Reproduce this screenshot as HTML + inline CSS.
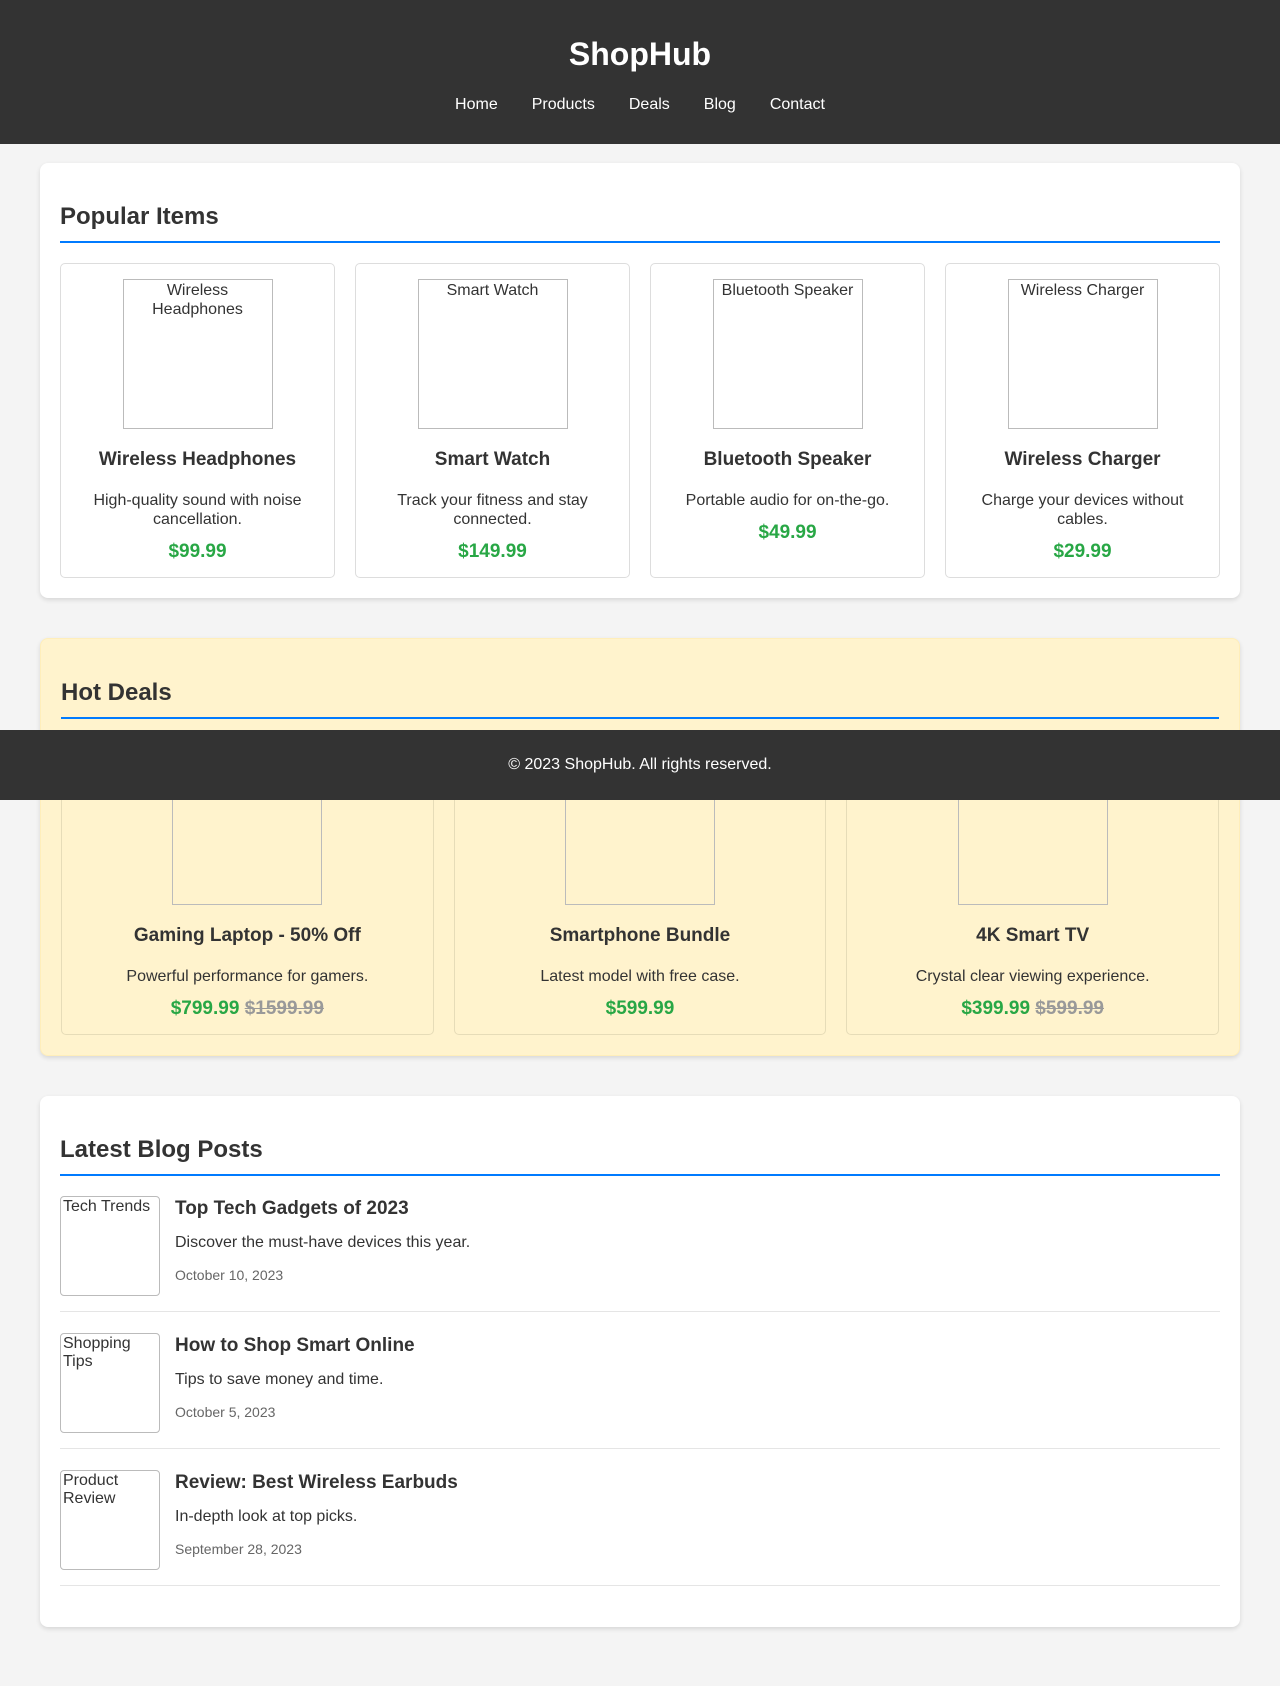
<!DOCTYPE html>
<html><head><meta charset="utf-8"><style>
*{box-sizing:border-box}
body{margin:0;background:#f4f4f4;font-family:"Liberation Sans",Arial,sans-serif;color:#333;height:1686px;position:relative}
header{background:#333;color:#fff;height:144px;text-align:center;padding-top:34px}
header h1{margin:0;font-size:32px;line-height:40px}
nav{margin-top:22px;font-size:16px}
nav a{color:#fff;text-decoration:none;margin:0 17px}
main{width:1200px;margin:0 auto;padding-top:19px}
section{background:#fff;border-radius:8px;box-shadow:0 2px 5px rgba(0,0,0,.12);padding:20px 20px 20px;margin-bottom:40px}
h2{font-size:24px;margin:20px 0 20px;padding-bottom:10px;border-bottom:2px solid #007bff;line-height:28px}
.grid{display:grid;gap:20px}
.g4{grid-template-columns:repeat(4,1fr)}
.g3{grid-template-columns:repeat(3,1fr)}
.item{border:1px solid #ddd;border-radius:5px;padding:15px;text-align:center}
.img{width:150px;height:150px;border:1px solid #bbb;margin:0 auto;font-size:16px;line-height:19px;padding:1px 8px 0;color:#333}
.item h3{font-size:19px;margin:20px 0 20px;line-height:22px}
.item p{margin:0 0 12px;font-size:16px;line-height:19px}
.item p.price{color:#28a745;font-weight:bold;font-size:19px;line-height:21px;margin:0}
.old{color:#999;text-decoration:line-through}
.deals{background:#fff3cd;border:1px solid #ffeeba}
.deals .item{border-color:#e6dcb8}
.post{display:flex;border-bottom:1px solid #e5e5e5;padding-bottom:15px;margin-bottom:21px}
.post .bimg{width:100px;height:100px;border:1px solid #bbb;border-radius:4px;flex:none;margin-right:15px;font-size:16px;line-height:18px;padding:1px 2px}
.post h3{margin:2px 0 14px;font-size:19px;line-height:22px}
.post p{margin:0 0 15px;font-size:16px}
.date{color:#666;font-size:14px}
footer{position:absolute;top:730px;left:0;right:0;height:70px;background:#333;color:#fff;text-align:center;line-height:70px;font-size:16px}
</style></head><body>
<header><h1>ShopHub</h1><nav><a>Home</a><a>Products</a><a>Deals</a><a>Blog</a><a>Contact</a></nav></header>
<main>
<section><h2>Popular Items</h2>
<div class="grid g4">
<div class="item"><div class="img">Wireless Headphones</div><h3>Wireless Headphones</h3><p>High-quality sound with noise cancellation.</p><p class="price">$99.99</p></div>
<div class="item"><div class="img">Smart Watch</div><h3>Smart Watch</h3><p>Track your fitness and stay connected.</p><p class="price">$149.99</p></div>
<div class="item"><div class="img">Bluetooth Speaker</div><h3>Bluetooth Speaker</h3><p>Portable audio for on-the-go.</p><p class="price">$49.99</p></div>
<div class="item"><div class="img">Wireless Charger</div><h3>Wireless Charger</h3><p>Charge your devices without cables.</p><p class="price">$29.99</p></div>
</div></section>
<section class="deals"><h2>Hot Deals</h2>
<div class="grid g3">
<div class="item"><div class="img">Gaming Laptop</div><h3>Gaming Laptop - 50% Off</h3><p>Powerful performance for gamers.</p><p class="price">$799.99 <span class="old">$1599.99</span></p></div>
<div class="item"><div class="img">Smartphone</div><h3>Smartphone Bundle</h3><p>Latest model with free case.</p><p class="price">$599.99</p></div>
<div class="item"><div class="img">4K TV</div><h3>4K Smart TV</h3><p>Crystal clear viewing experience.</p><p class="price">$399.99 <span class="old">$599.99</span></p></div>
</div></section>
<section><h2>Latest Blog Posts</h2>
<div class="post"><div class="bimg">Tech Trends</div><div><h3>Top Tech Gadgets of 2023</h3><p>Discover the must-have devices this year.</p><div class="date">October 10, 2023</div></div></div>
<div class="post"><div class="bimg">Shopping Tips</div><div><h3>How to Shop Smart Online</h3><p>Tips to save money and time.</p><div class="date">October 5, 2023</div></div></div>
<div class="post"><div class="bimg">Product Review</div><div><h3>Review: Best Wireless Earbuds</h3><p>In-depth look at top picks.</p><div class="date">September 28, 2023</div></div></div>
</section>
</main>
<footer>© 2023 ShopHub. All rights reserved.</footer>
</body></html>
